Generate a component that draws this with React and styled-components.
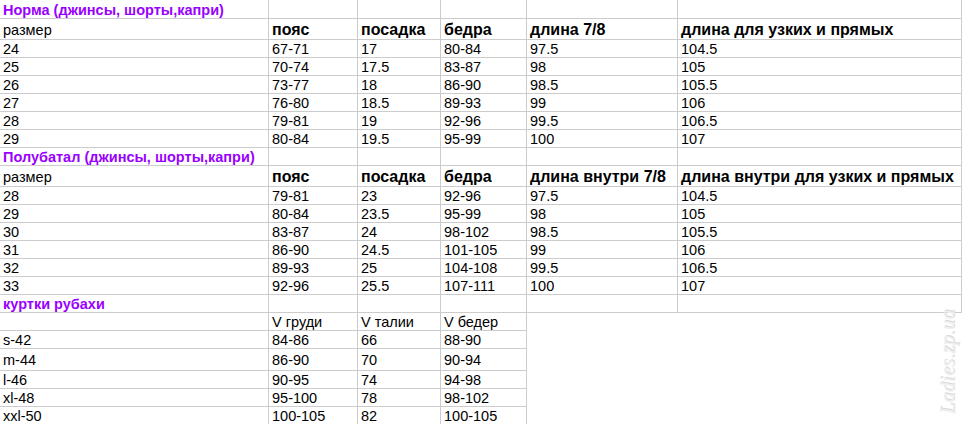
import React from 'react';
import styled, { createGlobalStyle } from 'styled-components';

const GlobalStyle = createGlobalStyle`
    html, body {
        margin: 0;
        padding: 0;
        background: #fff;
    }
    body {
        font-family: "Liberation Sans", Arial, sans-serif;
        width: 962px;
        height: 424px;
        overflow: hidden;
    }
`;

const COLS = [269, 89, 83, 86, 151, 284];

const Sheet = styled.div`
    position: relative;
    width: 962px;
`;

const Row = styled.div`
    display: grid;
    grid-template-columns: ${p => COLS.slice(0, p.$cols).map(w => w + 'px').join(' ')};
    height: ${p => p.$h}px;
`;

const Cell = styled.div`
    box-sizing: border-box;
    display: flex;
    align-items: center;
    padding: 1px 3px 0;
    border-right: 1px solid #cccccc;
    border-bottom: 1px solid #cccccc;
    font-size: ${p => (p.$bold ? 16 : 14.5)}px;
    line-height: 16px;
    white-space: nowrap;
    overflow: visible;
    color: ${p => (p.$title ? '#9900ff' : '#000')};
    font-weight: ${p => (p.$bold || p.$title ? 700 : 400)};
`;

const Watermark = styled.div`
    position: absolute;
    left: 937px;
    top: 298px;
    width: 116px;
    height: 20px;
    transform-origin: 0 0;
    transform: translate(0, 116px) rotate(-90deg);
    font-family: "Liberation Serif", serif;
    font-style: italic;
    font-size: 20px;
    line-height: 20px;
    letter-spacing: 0.3px;
    color: #efefef;
    text-shadow: 1px 1px 0 #dadada;
    white-space: nowrap;
`;

const norma = [
    ['24', '67-71', '17', '80-84', '97.5', '104.5'],
    ['25', '70-74', '17.5', '83-87', '98', '105'],
    ['26', '73-77', '18', '86-90', '98.5', '105.5'],
    ['27', '76-80', '18.5', '89-93', '99', '106'],
    ['28', '79-81', '19', '92-96', '99.5', '106.5'],
    ['29', '80-84', '19.5', '95-99', '100', '107'],
];

const polubatal = [
    ['28', '79-81', '23', '92-96', '97.5', '104.5'],
    ['29', '80-84', '23.5', '95-99', '98', '105'],
    ['30', '83-87', '24', '98-102', '98.5', '105.5'],
    ['31', '86-90', '24.5', '101-105', '99', '106'],
    ['32', '89-93', '25', '104-108', '99.5', '106.5'],
    ['33', '92-96', '25.5', '107-111', '100', '107'],
];

const jackets = [
    ['s-42', '84-86', '66', '88-90', 18],
    ['m-44', '86-90', '70', '90-94', 22],
    ['l-46', '90-95', '74', '94-98', 18],
    ['xl-48', '95-100', '78', '98-102', 18],
    ['xxl-50', '100-105', '82', '100-105', 18],
];

function TitleRow({ text, h }) {
    return (
        <Row $cols={6} $h={h}>
            <Cell $title>{text}</Cell>
            {[1, 2, 3, 4, 5].map(i => <Cell key={i} />)}
        </Row>
    );
}

function HeaderRow({ cells }) {
    return (
        <Row $cols={6} $h={21}>
            <Cell>размер</Cell>
            {cells.map(c => <Cell key={c} $bold>{c}</Cell>)}
        </Row>
    );
}

function DataRows({ rows }) {
    return rows.map(r => (
        <Row key={r[0]} $cols={6} $h={18}>
            {r.map((c, i) => <Cell key={i}>{c}</Cell>)}
        </Row>
    ));
}

export default function App() {
    return (
        <>
            <GlobalStyle />
            <Sheet>
                <TitleRow text="Норма (джинсы, шорты,капри)" h={19} />
                <HeaderRow cells={['пояс', 'посадка', 'бедра', 'длина 7/8', 'длина для узких и прямых']} />
                <DataRows rows={norma} />

                <TitleRow text="Полубатал (джинсы, шорты,капри)" h={18} />
                <HeaderRow cells={['пояс', 'посадка', 'бедра', 'длина внутри 7/8', 'длина внутри для узких и прямых']} />
                <DataRows rows={polubatal} />

                <TitleRow text="куртки рубахи" h={18} />
                <Row $cols={4} $h={18}>
                    <Cell />
                    <Cell>V груди</Cell>
                    <Cell>V талии</Cell>
                    <Cell>V бедер</Cell>
                </Row>
                {jackets.map(([size, chest, waist, hips, h]) => (
                    <Row key={size} $cols={4} $h={h}>
                        <Cell>{size}</Cell>
                        <Cell>{chest}</Cell>
                        <Cell>{waist}</Cell>
                        <Cell>{hips}</Cell>
                    </Row>
                ))}

                <Watermark>Ladies.zp.ua</Watermark>
            </Sheet>
        </>
    );
}
